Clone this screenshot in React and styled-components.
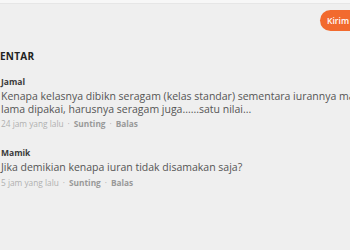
import styled, { createGlobalStyle } from "styled-components";

const GlobalStyle = createGlobalStyle`
    html, body {
        margin: 0;
        padding: 0;
        background: #efefef;
        overflow: hidden;
    }
    body {
        font-family: "Open Sans", "Liberation Sans", sans-serif;
    }
`;

const comments = [
    {
        name: "Jamal",
        text: "Kenapa kelasnya dibikn seragam (kelas standar) sementara iurannya masih lama dipakai, harusnya seragam juga......satu nilai...",
        time: "24 jam yang lalu",
    },
    {
        name: "Mamik",
        text: "Jika demikian kenapa iuran tidak disamakan saja?",
        time: "5 jam yang lalu",
    },
];

export default function App() {
    return (
        <>
            <GlobalStyle />
            <TopStrip />
            <StyledPage>
                <FormRow>
                    <SendButton>Kirim</SendButton>
                </FormRow>
                <Heading>KOMENTAR</Heading>
                {comments.map((c) => (
                    <Comment key={c.name}>
                        <Name>{c.name}</Name>
                        <Text>{c.text}</Text>
                        <Meta>
                            {c.time}
                            <Dot>·</Dot>
                            <Action>Sunting</Action>
                            <Dot>·</Dot>
                            <Action>Balas</Action>
                        </Meta>
                    </Comment>
                ))}
            </StyledPage>
        </>
    );
}

const TopStrip = styled.div`
    height: 3px;
    background: #f7f7f7;
    border-bottom: 1px solid #e6e6e6;
`;

const StyledPage = styled.div`
    width: 380px;
    padding-left: 1px;
`;

const FormRow = styled.div`
    display: flex;
    justify-content: flex-end;
    padding-top: 6px;
    width: 358px;
`;

const SendButton = styled.button`
    background: #f26a2e;
    color: #fff;
    border: none;
    border-radius: 11px;
    height: 21px;
    padding: 0 10px 0 7px;
    font-family: inherit;
    font-size: 8.5px;
    font-weight: 600;
`;

const Heading = styled.h3`
    margin: 18px 0 13px -26px;
    font-size: 10px;
    font-weight: 700;
    color: #222;
    letter-spacing: 0.3px;
`;

const Comment = styled.div`
    margin-bottom: 18px;
`;

const Name = styled.div`
    font-size: 8.5px;
    font-weight: 700;
    color: #3a3a3a;
    margin-bottom: 3px;
`;

const Text = styled.div`
    font-size: 10.5px;
    color: #555;
    line-height: 12.5px;
    width: 370px;
`;

const Meta = styled.div`
    margin-top: 3px;
    font-size: 8.3px;
    color: #b0b0b0;
`;

const Dot = styled.span`
    margin: 0 4px;
`;

const Action = styled.span`
    font-weight: 700;
    color: #999;
`;
